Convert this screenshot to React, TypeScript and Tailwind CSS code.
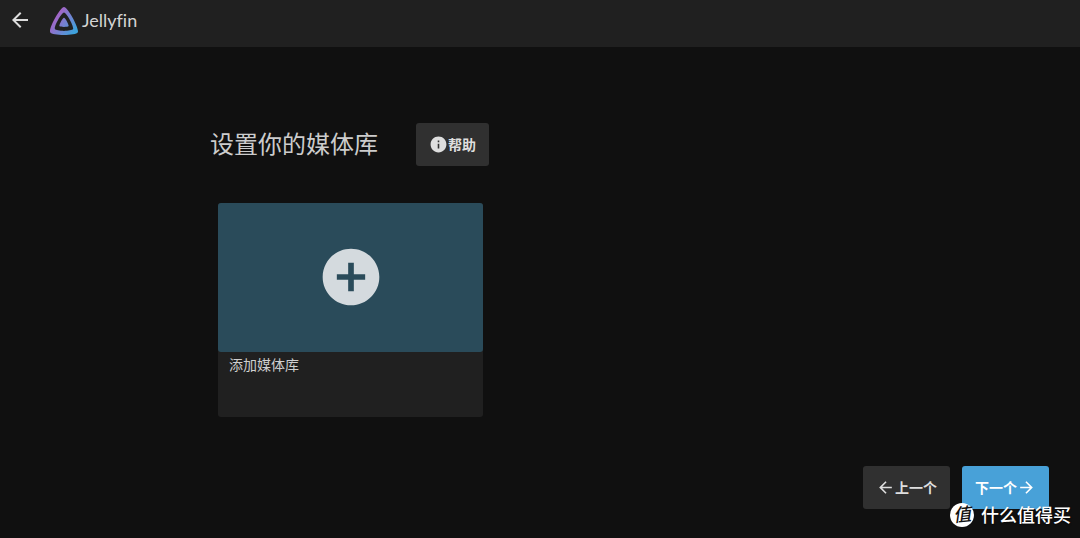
import React from "react"
import { MdAddCircle, MdArrowBack, MdArrowForward, MdInfo } from "react-icons/md"

const JellyfinIcon: React.FC = () => (
  <svg viewBox="0 0 24 24" className="h-7 w-7" aria-hidden="true">
    <defs>
      <linearGradient id="jellyfin-gradient" gradientUnits="userSpaceOnUse" x1="4" y1="9" x2="21" y2="21">
        <stop offset="0" stopColor="#a563c6" />
        <stop offset="1" stopColor="#3ea2dc" />
      </linearGradient>
    </defs>
    <path
      fill="url(#jellyfin-gradient)"
      d="M12 .002C8.826.002-1.398 18.537.16 21.666c1.56 3.129 22.14 3.094 23.682 0C25.384 18.573 15.177 0 12 0zm7.76 18.949c-1.008 2.028-14.493 2.05-15.514 0C3.224 16.9 9.92 4.755 12.003 4.755c2.081 0 8.77 12.166 7.759 14.196zM12 9.198c-1.054 0-4.446 6.15-3.93 7.189.518 1.04 7.348 1.027 7.86 0 .511-1.027-2.874-7.19-3.93-7.19z"
    />
  </svg>
)

const Header: React.FC = () => (
  <header className="flex h-[47px] items-start bg-[#202020] px-2">
    <button aria-label="返回" className="mt-2 h-6 w-6 text-[#dddddd]">
      <MdArrowBack className="h-6 w-6" />
    </button>
    <a href="#" className="mt-[7px] ml-[18px] flex items-center gap-1">
      <JellyfinIcon />
      <span className="pb-0.5 font-['Lato',sans-serif] text-lg leading-6 text-[#d4d4d4] [font-variant-ligatures:none]">
        Jellyfin
      </span>
    </a>
  </header>
)

interface IWizardButtonProps {
  children: React.ReactNode
  primary?: boolean
}

const WizardButton: React.FC<IWizardButtonProps> = ({ children, primary }) => (
  <button
    className={`flex h-[43px] items-center rounded-[3px] px-[13px] text-sm font-bold whitespace-nowrap ${
      primary ? "bg-[#48a1d8] text-white" : "bg-[#303030] text-[#dedede]"
    }`}
  >
    {children}
  </button>
)

const AddLibraryCard: React.FC = () => (
  <button className="ml-2 flex w-[265px] flex-col rounded-[3px] bg-[#202020] text-left">
    <span className="flex h-[149px] w-full items-center justify-center rounded-[3px] bg-[#2a4b5a] pb-0.5">
      <MdAddCircle className="h-[68px] w-[68px] text-[#d4dade]" />
    </span>
    <span className="h-[65px] px-[11px] pt-0.5 text-sm text-[#cfcfcf]">添加媒体库</span>
  </button>
)

// Site mark in the bottom right corner
const Watermark: React.FC = () => (
  <div className="absolute right-[9px] bottom-2.5 flex items-center gap-[7px]">
    <span className="flex h-6 w-6 items-center justify-center rounded-full bg-white text-lg leading-6 font-medium text-[#111111] italic">
      <span className="-rotate-6 pb-1">值</span>
    </span>
    <span className="pb-0.5 text-lg leading-6 font-medium text-white text-shadow-[0_1px_2px_#00000099]">什么值得买</span>
  </div>
)

const App: React.FC = () => {
  return (
    <div className="relative min-h-screen bg-[#101010] font-['Noto_Sans_CJK_SC',sans-serif]">
      <Header />

      <main className="pt-[76px] pr-[31px] pb-7 pl-[210px]">
        <div className="mb-[37px] flex items-center gap-[38px]">
          <h1 className="pb-1 text-2xl text-[#cccccc]">设置你的媒体库</h1>
          <WizardButton>
            <MdInfo className="h-[19px] w-[19px]" />
            <span className="pb-0.5">帮助</span>
          </WizardButton>
        </div>

        <AddLibraryCard />

        <div className="mt-[49px] flex justify-end gap-3">
          <WizardButton>
            <MdArrowBack className="h-[19px] w-[19px]" />
            <span className="pb-0.5">上一个</span>
          </WizardButton>
          <WizardButton primary>
            <span className="pb-0.5">下一个</span>
            <MdArrowForward className="h-[19px] w-[19px]" />
          </WizardButton>
        </div>
      </main>

      <Watermark />
    </div>
  )
}

export default App
